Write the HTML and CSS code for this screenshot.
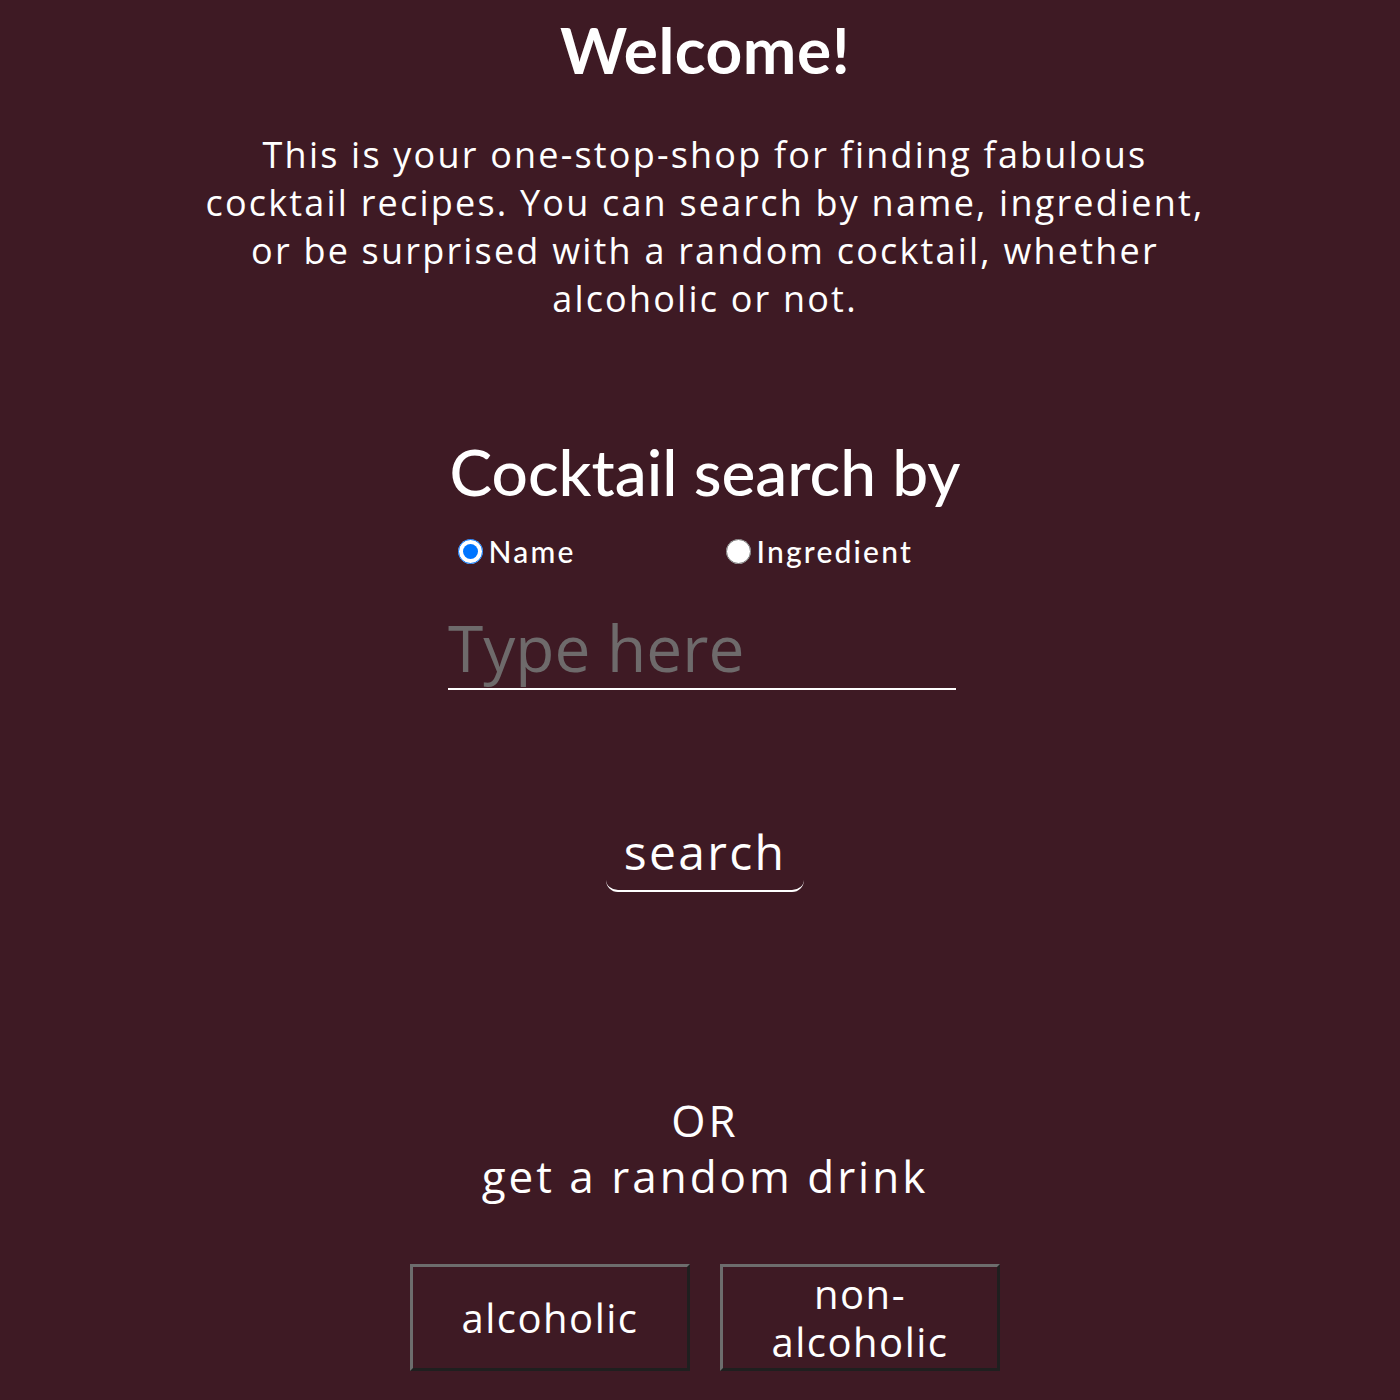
FILE: index.html
```html
<!DOCTYPE html>
<html>
<head>
<meta charset="utf-8">
<link rel="stylesheet" href="styles.css">
</head>
<body>
<main class="page">
  <h1 class="title">Welcome!</h1>
  <p class="intro">This is your one-stop-shop for finding fabulous cocktail recipes. You can search by name, ingredient, or be surprised with a random cocktail, whether alcoholic or not.</p>
  <section class="search">
    <h2 class="search-title">Cocktail search by</h2>
    <div class="radios">
      <label class="radio"><input type="radio" name="by" checked><span>Name</span></label>
      <label class="radio"><input type="radio" name="by"><span>Ingredient</span></label>
    </div>
    <input class="query" type="text" placeholder="Type here">
    <button class="search-btn">search</button>
  </section>
  <section class="random">
    <p class="or">OR<br>get a random drink</p>
    <div class="random-btns">
      <button class="rbtn">alcoholic</button>
      <button class="rbtn">non-alcoholic</button>
    </div>
  </section>
</main>
</body>
</html>
```
FILE: styles.css
```css
html, body {
  margin: 0;
  padding: 0;
  background: #3e1a24;
}
body {
  color: #ffffff;
  font-family: "Open Sans", "Liberation Sans", sans-serif;
  font-weight: 400;
}
.page {
  display: flex;
  flex-direction: column;
  align-items: center;
  padding-left: 10px;
}
.title {
  margin: 11px 0 0;
  font-family: "Lato", sans-serif;
  font-weight: 700;
  font-size: 64px;
  line-height: 78px;
  letter-spacing: 0.5px;
}
.intro {
  width: 1000px;
  margin: 42px 0 0;
  text-align: center;
  font-size: 36px;
  line-height: 48px;
  letter-spacing: 2.2px;
}
.search {
  display: flex;
  flex-direction: column;
  align-items: center;
  margin-top: 110px;
}
.search-title {
  margin: 0;
  font-family: "Lato", sans-serif;
  font-weight: 500;
  font-size: 64px;
  line-height: 78px;
}
.radios {
  display: grid;
  grid-template-columns: 268px 242px;
  width: 510px;
  margin: 22px 5px 0 0;
}
.radio {
  display: flex;
  align-items: center;
  font-family: "Lato", sans-serif;
  font-weight: 500;
  font-size: 30px;
  letter-spacing: 2.2px;
  padding-left: 10px;
}
.radio input {
  width: 25px;
  height: 25px;
  margin: 0 6px 0 0;
}
.query {
  width: 508px;
  margin: 39px 6px 0 0;
  padding: 0;
  border: none;
  border-bottom: 2px solid #ffffff;
  background: transparent;
  color: #fff;
  font-family: "Open Sans", sans-serif;
  font-weight: 400;
  font-size: 64px;
  line-height: 80px;
  height: 80px;
  outline: none;
}
.query::placeholder {
  color: #6e6a6b;
}
.search-btn {
  margin-top: 130px;
  width: 198px;
  padding: 0 0 6px;
  background: transparent;
  color: #fff;
  border: none;
  border-bottom: 2px solid #fff;
  border-radius: 0 0 12px 12px;
  font-family: "Open Sans", sans-serif;
  font-weight: 400;
  font-size: 48px;
  line-height: 64px;
  letter-spacing: 2.3px;
}
.random {
  display: flex;
  flex-direction: column;
  align-items: center;
  margin-top: 200px;
}
.or {
  margin: 0;
  text-align: center;
  font-size: 44px;
  line-height: 56px;
  letter-spacing: 3px;
}
.random-btns {
  display: flex;
  gap: 30px;
  margin-top: 60px;
}
.rbtn {
  width: 280px;
  height: 107px;
  background: #3e1a24;
  color: #fff;
  border: 3px solid;
  border-color: #6d6d6d #1f1f1f #1f1f1f #6d6d6d;
  font-family: "Open Sans", sans-serif;
  font-weight: 400;
  font-size: 40px;
  line-height: 48px;
  letter-spacing: 1.5px;
  padding: 0 40px;
}
```
